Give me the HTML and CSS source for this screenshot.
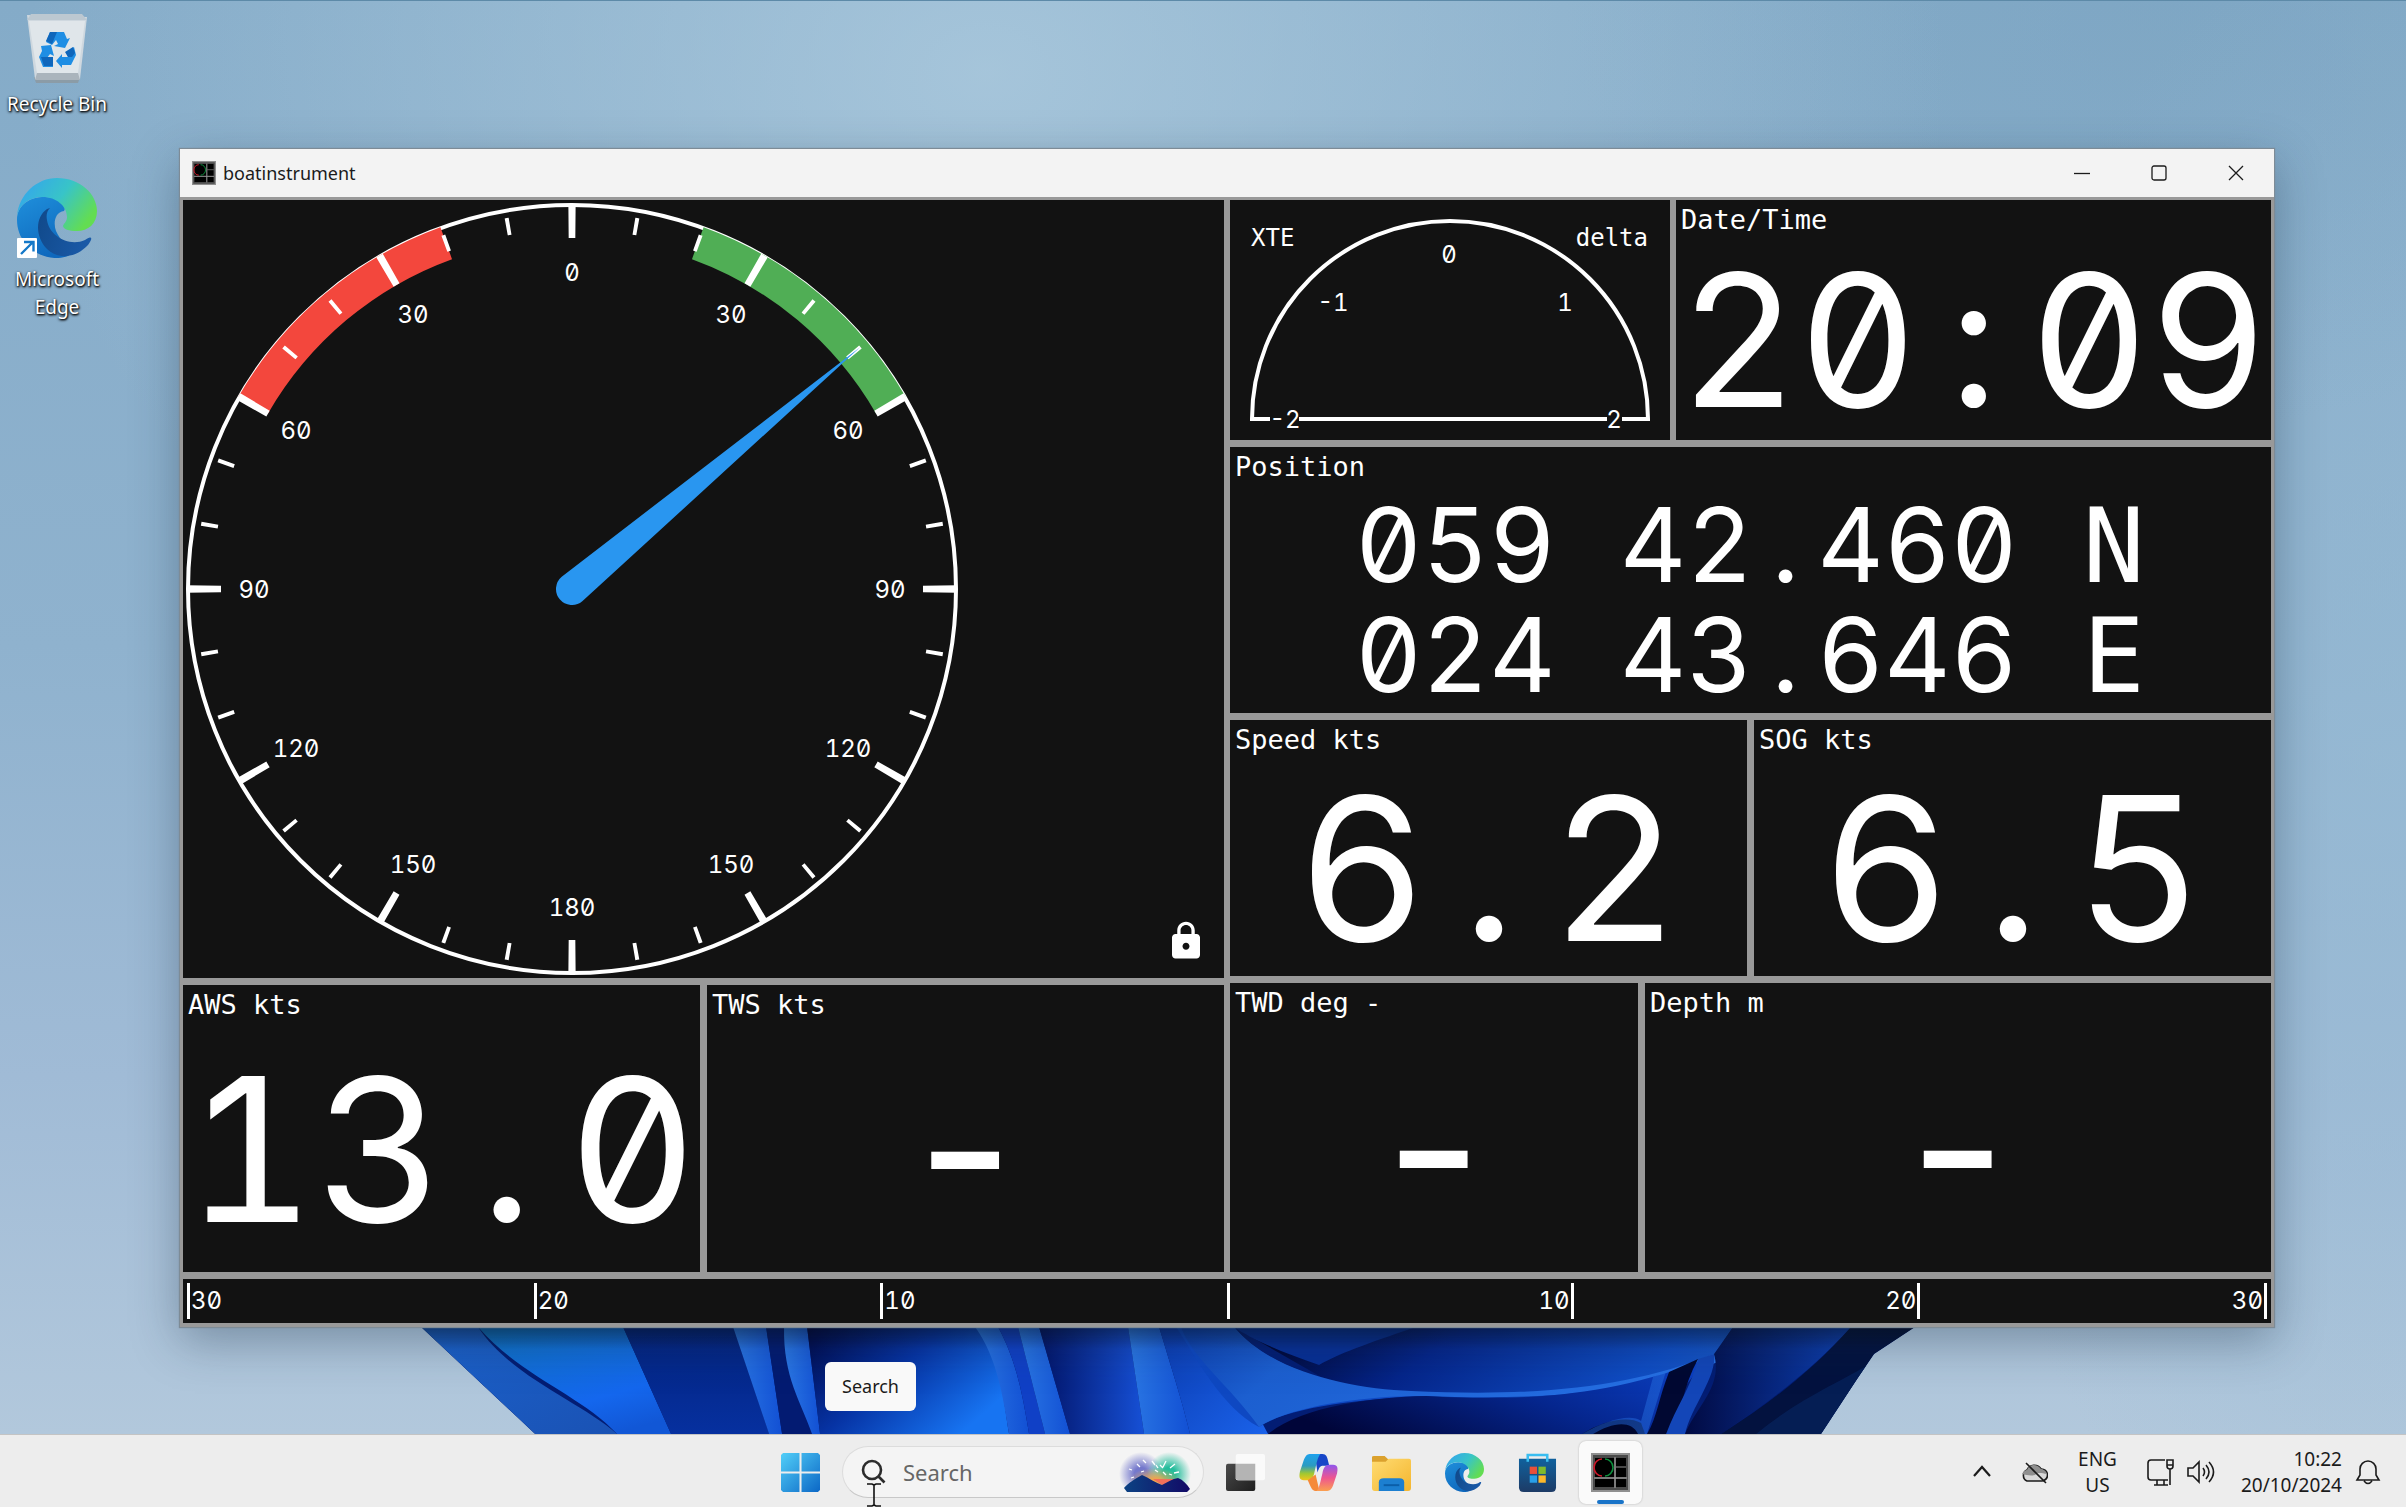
FILE: index.html
```html
<!DOCTYPE html>
<html lang="en">
<head>
<meta charset="utf-8">
<title>boatinstrument</title>
<link rel="stylesheet" href="styles.css">
</head>
<body>
<svg class="defs" aria-hidden="true">
  <defs>
    <linearGradient id="edgeTop" x1="0" y1="0.2" x2="1" y2="0.7"><stop offset="0.1" stop-color="#35abe6"/><stop offset="0.5" stop-color="#38c4c8"/><stop offset="0.95" stop-color="#63dd52"/></linearGradient>
    <linearGradient id="edgeMid" x1="0" y1="0" x2="0.5" y2="1"><stop offset="0" stop-color="#1f8fdb"/><stop offset="1" stop-color="#0e68bd"/></linearGradient>
    <linearGradient id="edgeLow" x1="0" y1="0.3" x2="1" y2="0.6"><stop offset="0" stop-color="#114a8c"/><stop offset="1" stop-color="#1a5aa8"/></linearGradient>
    <symbol id="edge" viewBox="0 0 80 80">
      <path fill="url(#edgeMid)" d="M0 42C0 26 14 19 27 19c17 0 23 9 20 14-9 1-11 12-8 20 4 10 14 17 22 18l-10 7C30 86 0 70 0 42z"/>
      <path fill="url(#edgeLow)" d="M30 31c-12 8-12 28 0 40 11 11 29 9 41-4 2-3 4-6 3-7s-3 0-6 2c-16 7-36-4-38-20-1-5 0-9 3-12z"/>
      <path fill="url(#edgeTop)" d="M0 38C2 16 20 0 40 0c23 0 40 16 40 33 0 13-9 20-20 20-8 0-14-2-14-5 0-2 4-4 4-9 0-11-11-20-24-20C12 19 2 27 0 38z"/>
    </symbol>
    <symbol id="boat" viewBox="0 0 39 39">
      <path fill="#8f8f8f" d="M0 0h39v39H0z"/><path fill="#4a4a4a" d="M2 2h35v35H2z"/>
      <path fill="#000" d="M4 5h19v19H4zM25 5h10v8H25zM25 15h10v9H25zM4 26h19v8H4zM25 26h10v8H25z"/>
      <path stroke="#a9a9a9" stroke-width="1" d="M24 4v31M3 25h33"/>
      <path fill="none" stroke="#d0182a" stroke-width="1.6" d="M11 6a8 8.500 0 0 0 0 17"/>
      <path fill="none" stroke="#0c8f3c" stroke-width="1.6" d="M14 6a8 8.500 0 0 1 0 17"/>
    </symbol>
  </defs>
</svg>

<main class="desktop">
  <svg class="bloom" viewBox="0 0 1494 107" aria-hidden="true">
    <defs>
      <linearGradient id="bA" x1="0" x2="1" y1="0" y2="1"><stop offset="0" stop-color="#1b62cc"/><stop offset="1" stop-color="#1a52b4"/></linearGradient>
      <linearGradient id="bB" x1="0.2" x2="0.7" y1="0" y2="1"><stop offset="0" stop-color="#0f72c6"/><stop offset="0.7" stop-color="#1467ee"/><stop offset="1" stop-color="#1157d6"/></linearGradient>
      <linearGradient id="bC" x2="0" y2="1"><stop offset="0" stop-color="#03237f"/><stop offset="1" stop-color="#06309f"/></linearGradient>
      <linearGradient id="bD"><stop offset="0" stop-color="#2b78e4"/><stop offset="1" stop-color="#1250d4"/></linearGradient>
      <linearGradient id="bG" x1="0" x2="1" y1="0" y2="0.6"><stop offset="0.02" stop-color="#000848"/><stop offset="0.5" stop-color="#0633a4"/><stop offset="1" stop-color="#1774f2"/></linearGradient>
      <linearGradient id="bK"><stop offset="0" stop-color="#021468"/><stop offset="1" stop-color="#1650d6"/></linearGradient>
      <linearGradient id="bM" x2="1" y2="1"><stop offset="0" stop-color="#0a3aae"/><stop offset="1" stop-color="#1a62ea"/></linearGradient>
      <linearGradient id="bN" x1="0" x2="1" y1="0" y2="0.2"><stop offset="0" stop-color="#0c3fb0"/><stop offset="0.25" stop-color="#1c5fd0"/><stop offset="1" stop-color="#2670e4"/></linearGradient>
      <linearGradient id="bP" x1="0" x2="1" y1="0.5" y2="0.7"><stop offset="0" stop-color="#00042e"/><stop offset="0.35" stop-color="#05258a"/><stop offset="0.8" stop-color="#0f4cc2"/><stop offset="1" stop-color="#1b5ac6"/></linearGradient>
      <linearGradient id="bQ" x1="0" x2="1" y1="0.6" y2="0.2"><stop offset="0" stop-color="#000539"/><stop offset="0.55" stop-color="#05268e"/><stop offset="1" stop-color="#0c40c4"/></linearGradient>
      <linearGradient id="bR"><stop offset="0" stop-color="#010a42"/><stop offset="1" stop-color="#0d40b4"/></linearGradient>
      <linearGradient id="bS" x2="0" y2="1"><stop offset="0" stop-color="#000" stop-opacity="0.35"/><stop offset="1" stop-color="#000" stop-opacity="0"/></linearGradient>
      <clipPath id="bloomEdge"><path d="M0 0H1494L1453 27 1436 52 1400 107H114z"/></clipPath>
    </defs>
    <g clip-path="url(#bloomEdge)">
      <path fill="#031d74" d="M0 0h1494v107H0z"/>
      <path fill="url(#bA)" d="M0 0H57C90 50 160 75 196 107H114z"/>
      <path fill="url(#bB)" d="M57 0H202L250 107H196C160 68 100 50 57 0z"/>
      <path fill="url(#bC)" d="M202 0H312L348 107H250z"/>
      <path fill="url(#bD)" d="M312 0H345L361 107H348z"/>
      <path fill="#031b72" d="M345 0H363C366 50 385 75 392 107H361z"/>
      <path fill="url(#bD)" d="M363 0H386L399 107H391C380 75 362 50 363 0z"/>
      <path fill="url(#bG)" d="M386 0H554C580 30 582 70 588 107H399z"/>
      <path fill="url(#bD)" d="M554 0H577C596 35 602 70 608 107H588C582 70 576 30 554 0z"/>
      <path fill="#1040c6" d="M577 0H597L624 107H608C602 70 596 35 577 0z"/>
      <path fill="url(#bD)" d="M597 0H618L649 107H624z"/>
      <path fill="url(#bK)" d="M618 0H707L723 107H649z"/>
      <path fill="url(#bD)" d="M707 0H738C750 40 760 70 769 107H723z"/>
      <path fill="url(#bM)" d="M738 0H790L847 107H769C760 70 750 40 738 0z"/>
      <path fill="url(#bP)" d="M813 0H1312L1294 27C1200 80 1040 90 900 50z"/>
      <path fill="#072f96" d="M813 0H995C960 12 920 25 898 38 860 25 830 12 813 0z"/>
      <path fill="#0e48c2" d="M755 0H813C850 45 930 64 1005 69 950 72 870 78 838 100 800 80 775 30 755 0z"/>
      <path fill="url(#bN)" d="M813 0C850 45 930 62 990 64 1120 70 1210 60 1293 27L1297 35C1220 65 1120 74 1005 69 950 68 870 78 838 100 810 60 770 30 760 0z"/>
      <path fill="url(#bQ)" d="M847 107C880 80 950 70 1005 69 1120 76 1200 65 1285 32L1228 107z"/>
      <path fill="#00072f" d="M1161 107C1180 95 1205 88 1220 96L1224 107z"/>
      <path fill="url(#bN)" d="M1161 107C1185 93 1210 86 1220 94L1232 50 1245 44 1226 107H1217C1210 92 1190 96 1172 107z" opacity="0.5"/>
      <path fill="#010832" d="M1248 45L1277 32C1262 60 1258 85 1258 107H1226C1236 90 1238 70 1248 45z"/>
      <path fill="#1346b8" d="M1277 32L1293 27C1296 50 1270 80 1264 107H1245C1255 80 1270 60 1277 32z"/>
      <path fill="url(#bR)" d="M1312 0H1430C1390 45 1340 80 1300 107H1264C1275 80 1302 60 1293 27z"/>
      <path fill="#03123f" d="M1430 0H1494L1453 27 1400 107H1300C1350 75 1390 45 1430 0z"/>
      <path fill="#07235e" d="M1450 36L1436 60 1400 107H1335C1380 70 1420 55 1450 36z" opacity="0.7"/>
      <path fill="url(#bS)" d="M0 0h1494v22H0z"/>
    </g>
  </svg>

  <nav class="shortcuts" aria-label="Desktop">
    <a class="shortcut" href="#recycle">
      <svg class="shortcut-icon" viewBox="0 0 80 72" aria-hidden="true">
        <path fill="#8d9499" d="M17 66h46l-2 6H19z" opacity="0.7"/>
        <path fill="#cfd8df" d="M10 4l60 2-7 62H18z"/><path fill="#e0e6ea" d="M12 10h56l-7 52H20z"/>
        <path fill="#bcc8d1" d="M14 3h51l5 6H10z"/><path fill="#aab4bc" d="M20 62h41l2 7H18z"/>
        <path fill="#1f8ee4" d="M33 21h14l3 7 3-1-5 10-11-2 4-2-2-4-4 5-6-3z"/><path fill="#0f66bb" d="M33 21h7l-5 12-6-3z"/>
        <path fill="#1f8ee4" d="M24 35l10-1 3 11-4-2-3 4h6v9H26l-4-10 3-6z"/><path fill="#0f66bb" d="M24 46h12v9H27z"/>
        <path fill="#1f8ee4" d="M39 50l6-7v3h6l-2-5 8-5 2 8-5 10H45v3z"/><path fill="#0f66bb" d="M48 41l8-5 2 6-3 4h-4z"/>
      </svg>
      <span>Recycle Bin</span>
    </a>
    <a class="shortcut" href="#edge">
      <svg class="shortcut-icon shortcut-icon--edge" viewBox="0 0 80 80" aria-hidden="true">
        <use href="#edge"/>
        <rect y="60" width="20" height="20" rx="1" fill="#fff"/>
        <path fill="none" stroke="#1478c8" stroke-width="2.4" d="M4 76L16 64M7 64h9.500v9.500"/>
      </svg>
      <span>Microsoft<br>Edge</span>
    </a>
  </nav>

  <section class="window" aria-label="boatinstrument">
    <header class="titlebar">
      <svg class="titlebar-icon" aria-hidden="true"><use href="#boat"/></svg>
      <h1 class="titlebar-text">boatinstrument</h1>
      <button class="caption" aria-label="Minimize"><svg viewBox="0 0 16 16"><path d="M0 8.500h16"/></svg></button>
      <button class="caption" aria-label="Maximize"><svg viewBox="0 0 16 16"><rect x="1" y="1" width="14" height="14" rx="2"/></svg></button>
      <button class="caption" aria-label="Close"><svg viewBox="0 0 16 16"><path d="M1 1l14 14M15 1L1 15"/></svg></button>
    </header>

    <div class="board">
      <div class="board-left">
        <article class="box box--dial">
          <svg class="dial" viewBox="0 0 778 778" role="img" aria-label="Apparent wind angle">
            <circle class="dial-ring" cx="389" cy="389" r="384"/>
            <g transform="rotate(-90 389 389)">
              <circle class="dial-port" cx="389" cy="389" r="368" pathLength="360"/>
              <circle class="dial-starboard" cx="389" cy="389" r="368" pathLength="360"/>
              <circle class="dial-minor" cx="389" cy="389" r="368" pathLength="360"/>
              <circle class="dial-major" cx="389" cy="389" r="368" pathLength="360"/>
            </g>
            <g class="dial-text">
              <text x="389" y="81">0</text>
              <text x="548" y="123">30</text><text x="665" y="239">60</text><text x="707" y="398">90</text>
              <text x="665" y="557">120</text><text x="548" y="673">150</text><text x="389" y="716">180</text>
              <text x="230" y="673">150</text><text x="113" y="557">120</text><text x="71" y="398">90</text>
              <text x="113" y="239">60</text><text x="230" y="123">30</text>
            </g>
            <path class="needle" transform="rotate(50 389 389)" d="M389 13L405 389a16 16 0 1 1-32 0z"/>
          </svg>
          <button class="lock" aria-label="Locked"><svg viewBox="0 0 24 24"><path d="M18 8h-1V6c0-2.760-2.240-5-5-5S7 3.240 7 6v2H6c-1.100 0-2 .9-2 2v10c0 1.100.9 2 2 2h12c1.100 0 2-.9 2-2V10c0-1.100-.9-2-2-2zm-6 9c-1.100 0-2-.9-2-2s.9-2 2-2 2 .9 2 2-.9 2-2 2zm3.100-9H8.900V6c0-1.710 1.390-3.100 3.100-3.100s3.100 1.390 3.100 3.100v2z"/></svg></button>
        </article>
        <div class="pair">
          <article class="box"><h2 class="label">AWS kts</h2><p class="value value--xl"><span>13<span class="cell">.</span>0</span></p></article>
          <article class="box"><h2 class="label">TWS kts</h2><p class="value value--none">-</p></article>
        </div>
      </div>

      <div class="board-right">
        <div class="pair pair--top">
          <article class="box">
            <svg class="xte" viewBox="0 0 440 240" role="img" aria-label="Cross track error">
              <path class="xte-arc" d="M22 219a198 198 0 0 1 396 0z"/>
              <path class="xte-gap" d="M40 206h29v26H40zM377 206h15v26h-15z"/>
              <text x="21" y="46">XTE</text><text x="418" y="46" text-anchor="end">delta</text>
              <g class="xte-scale"><text x="219" y="63">0</text><text x="103" y="111">-1</text><text x="335" y="111">1</text><text x="55" y="228">-2</text><text x="384" y="228">2</text></g>
            </svg>
          </article>
          <article class="box"><h2 class="label">Date/Time</h2><p class="value value--time"><span>20<span class="cell">:</span>09</span></p></article>
        </div>
        <article class="box"><h2 class="label">Position</h2><p class="value value--position"><span>059<span class="cell"> </span>42<span class="cell">.</span>460<span class="cell"> </span><span class="cell hemisphere">N</span></span><span>024<span class="cell"> </span>43<span class="cell">.</span>646<span class="cell"> </span><span class="cell hemisphere">E</span></span></p></article>
        <div class="pair">
          <article class="box"><h2 class="label">Speed kts</h2><p class="value value--xl"><span>6<span class="cell">.</span>2</span></p></article>
          <article class="box"><h2 class="label">SOG kts</h2><p class="value value--xl"><span>6<span class="cell">.</span>5</span></p></article>
        </div>
        <div class="pair pair--bottom">
          <article class="box"><h2 class="label">TWD deg -</h2><p class="value value--none">-</p></article>
          <article class="box"><h2 class="label">Depth m</h2><p class="value value--none">-</p></article>
        </div>
      </div>

      <article class="box rudder" aria-label="Rudder angle">
        <span>30</span><span>20</span><span>10</span>
        <span class="stbd stbd--first">10</span><span class="stbd">20</span><span class="stbd">30</span>
      </article>
    </div>
  </section>

  <div class="tooltip" role="tooltip">Search</div>
</main>

<footer class="taskbar">
  <div class="apps">
    <button class="app" aria-label="Start"><svg viewBox="0 0 38 38">
      <defs><linearGradient id="win" x1="0" y1="0" x2="38" y2="38" gradientUnits="userSpaceOnUse"><stop offset="0" stop-color="#52cff8"/><stop offset="1" stop-color="#0b67c6"/></linearGradient></defs>
      <path fill="url(#win)" d="M2 0h16v18H0V2zM20 0h16l2 2v16H20zM0 20h18v18H2l-2-2zM20 20h18v16l-2 2H20z"/></svg></button>
    <div class="search">
      <svg class="search-glass" viewBox="0 0 26 26" aria-hidden="true"><circle cx="11" cy="11" r="9"/><path d="M17.500 17.500l6 6"/></svg>
      <input class="search-input" type="search" aria-label="Search" placeholder="Search">
      <svg class="search-art" viewBox="0 0 72 40" aria-hidden="true">
        <defs>
          <radialGradient id="gl1"><stop offset="0.3" stop-color="#7478cc"/><stop offset="1" stop-color="#7478cc" stop-opacity="0"/></radialGradient>
          <radialGradient id="gl2"><stop offset="0.3" stop-color="#25bd9c"/><stop offset="1" stop-color="#25bd9c" stop-opacity="0"/></radialGradient>
          <radialGradient id="gl3"><stop offset="0.1" stop-color="#f0a54a"/><stop offset="1" stop-color="#e9b45c" stop-opacity="0"/></radialGradient>
          <linearGradient id="hill"><stop offset="0" stop-color="#0c4283"/><stop offset="1" stop-color="#120a66"/></linearGradient>
        </defs>
        <circle cx="22" cy="22" r="22" fill="url(#gl1)"/><circle cx="50" cy="22" r="22" fill="url(#gl2)"/><ellipse cx="36" cy="28" rx="26" ry="12" fill="url(#gl3)"/>
        <path fill="#f2705a" d="M34 27l12 8 12-8z"/>
        <path fill="url(#hill)" d="M5 36c4-5 11-9 18-13 7 3 14 8 20 10 6-3 10-6 16-7 5 2 9 6 12 11l-3 3H8z"/>
        <path fill="none" stroke="#fff" stroke-width="1.300" d="M10 17l3 1M18 12l3 3M24 8l3 3M33 9l3 4M41 13l3 3M47 9l-3 6M56 12l-5 4M60 20l-5 1M36 18l3 2M44 20l3 3M50 22l3 1M12 26l3-1M22 20l3-1M37 13l2 3"/>
      </svg>
    </div>
    <button class="app" aria-label="Task view"><svg viewBox="0 0 40 38">
      <defs><linearGradient id="tv" x2="1" y2="1"><stop offset="0" stop-color="#4a4a4a"/><stop offset="1" stop-color="#1e1e1e"/></linearGradient></defs>
      <rect y="10" width="30" height="28" rx="2" fill="url(#tv)"/><rect x="10" width="30" height="27" rx="2" fill="#fafafa"/><path fill="#b4b4b4" d="M10 10h20v17H12l-2-2z"/></svg></button>
    <button class="app" aria-label="Copilot"><svg viewBox="0 0 40 38">
      <defs>
        <linearGradient id="cp1" x2="0" y2="1"><stop offset="0" stop-color="#1ea2ee"/><stop offset="0.45" stop-color="#2b9bc0"/><stop offset="0.75" stop-color="#a2c830"/><stop offset="1" stop-color="#f2c51c"/></linearGradient>
        <linearGradient id="cp2" x2="0" y2="1"><stop offset="0" stop-color="#8f56ee"/><stop offset="0.5" stop-color="#ee5590"/><stop offset="1" stop-color="#fba04f"/></linearGradient>
      </defs>
      <path fill="#1746c8" d="M16 0h8c4 0 5 3 6 8l1 4h-7c-3 0-4 4-5 7z"/>
      <path fill="url(#cp1)" d="M12 0h10c-3 3-4 10-6 18-1 6-3 9-7 9H5c-5 0-5-4-4-9L5 6c2-5 4-6 7-6z"/>
      <path fill="#f58a3a" d="M9 27l8-6 4 17h-4c-4 0-5-5-8-11z"/>
      <path fill="url(#cp2)" d="M28 38H18c3-3 4-10 6-18 1-6 3-9 7-9h4c5 0 5 4 4 9l-4 12c-2 5-4 6-7 6z"/>
      </svg></button>
    <button class="app" aria-label="File Explorer"><svg viewBox="0 0 40 38">
      <defs><linearGradient id="fd" x2="1" y2="1"><stop offset="0" stop-color="#ffdc72"/><stop offset="1" stop-color="#f4b52e"/></linearGradient></defs>
      <path fill="#dba12d" d="M0 3q0-1 2-1h11l4 4v6H0z"/><path fill="url(#fd)" d="M0 8h14l3-3h21q2 0 2 2v28q0 3-3 3H3q-3 0-3-3z"/>
      <path fill="#1c7fd0" d="M7 38V29q0-4 5-4h16q5 0 5 4v9z"/><path fill="#0b5ea8" d="M12 31h16v2H12z"/></svg></button>
    <button class="app" aria-label="Microsoft Edge"><svg viewBox="0 0 80 80"><use href="#edge"/></svg></button>
    <button class="app" aria-label="Microsoft Store"><svg viewBox="0 0 40 40">
      <defs><linearGradient id="ms" x2="0" y2="1"><stop offset="0" stop-color="#10619d"/><stop offset="1" stop-color="#1d3b66"/></linearGradient></defs>
      <path fill="url(#ms)" d="M1 6h38v29q0 5-5 5H6q-5 0-5-5z"/><path fill="none" stroke="#39bdf0" stroke-width="2.600" d="M10 9V2h20v7"/>
      <path fill="#e9503a" d="M12 14h7.500v7.500H12z"/><path fill="#7fba2c" d="M21 14h7.500v7.500H21z"/><path fill="#28a0e8" d="M12 23h7.500v7.500H12z"/><path fill="#fcb82a" d="M21 23h7.500v7.500H21z"/></svg></button>
    <button class="app app--active" aria-label="boatinstrument"><svg viewBox="0 0 39 39"><use href="#boat"/></svg></button>
  </div>

  <div class="tray">
    <button class="tray-btn" aria-label="Show hidden icons"><svg class="tray-icon" viewBox="0 0 28 28"><path stroke-width="2.200" d="M6 18l8-9 8 9"/></svg></button>
    <button class="tray-btn" aria-label="OneDrive"><svg class="tray-icon" viewBox="0 0 28 28"><path fill="#d9d9d9" d="M7 23a6 6 0 0 1 0-11 8 8 0 0 1 14-1 6 6 0 0 1 1 12z"/><path fill="#8f8f8f" stroke="none" d="M2 16c2-4 5-4 5-4 2-6 10-7 14-1 2 0 5 2 6 5-6-1-9-2-12 1-4 1-9 0-13-1z"/><path d="M6 5l20 20"/></svg></button>
    <button class="tray-btn tray-btn--text tray-btn--lang">ENG<br>US</button>
    <button class="tray-btn" aria-label="Network and volume">
      <svg class="tray-icon" viewBox="0 0 28 28"><path d="M18 2H4a3 3 0 0 0-3 3v14a3 3 0 0 0 3 3h17M7 27h14M10 22v5M17 22v5M20 2h6v6a3 3 0 0 1-6 0zM20 7h6M23 11v16"/></svg>
      <svg class="tray-icon" viewBox="0 0 28 28"><path d="M1 10h5l6-6v20l-6-6H1zM16 10q3 4 0 8M19 7q6 7 0 14M22 4q9 10 0 20"/></svg>
    </button>
    <button class="tray-btn tray-btn--text tray-btn--clock">10:22<br>20/10/2024</button>
    <button class="tray-btn" aria-label="Notifications"><svg class="tray-icon" viewBox="0 0 28 28"><path d="M3 22l3-5v-6a8 8 0 0 1 16 0v6l3 5zM10 23q4 5 8 0"/></svg></button>
  </div>

  <svg class="ibeam" viewBox="0 0 14 24" aria-hidden="true"><path d="M0 1h5l2 1 2-1h5M7 2v20M0 23h5l2-1 2 1h5"/></svg>
</footer>
</body>
</html>
```
FILE: styles.css
```css
* { box-sizing: border-box; }

body {
  margin: 0;
  height: 100vh;
  display: flex;
  flex-direction: column;
  overflow: hidden;
  font-family: "Noto Sans", "Open Sans", sans-serif;
  font-size: 18px;
  color: #1b1b1b;
}

h1, h2, p { margin: 0; font-weight: 400; }
button { border: 0; padding: 0; background: none; font: inherit; color: inherit; }
svg { display: block; }
.defs { position: absolute; width: 0; height: 0; }

/* Desktop */
.desktop {
  flex: 1;
  position: relative;
  border-top: 1px solid #5d8aa8;
  background:
    radial-gradient(ellipse 40% 50% at 41% 5%, rgba(176, 205, 224, 0.75), transparent),
    radial-gradient(ellipse 25% 30% at 90% 0%, rgba(118, 160, 190, 0.4), transparent),
    radial-gradient(ellipse 20% 60% at 100% 55%, rgba(150, 186, 212, 0.7), transparent),
    linear-gradient(180deg, #84abc8 0%, #8fb2ce 45%, #a0bbd6 75%, #b2c8dc 100%);
}

.bloom {
  position: absolute;
  left: 17.5%;
  bottom: 0;
  width: 62.1%;
}

.shortcuts {
  width: 114px;
  padding-top: 10px;
  display: flex;
  flex-direction: column;
  gap: 60px;
}
.shortcut {
  display: flex;
  flex-direction: column;
  align-items: center;
  gap: 7px;
  font-size: 19px;
  line-height: 28px;
  text-align: center;
  text-decoration: none;
  color: #fff;
  text-shadow: 0 1px 3px #000, 1px 1px 2px #000;
}
.shortcut-icon { width: 80px; height: 72px; }
.shortcut-icon--edge { height: 80px; }

.window {
  position: absolute;
  top: 148px;
  right: 132px;
  bottom: 107px;
  left: 180px;
  display: flex;
  flex-direction: column;
  background: #999;
  box-shadow: 0 0 1px 1px #7d8b96, 0 14px 44px rgba(20, 40, 60, 0.35);
}

.titlebar {
  height: 48px;
  padding-left: 11px;
  display: flex;
  align-items: center;
  background: #f3f3f3;
}
.titlebar-icon { width: 26px; height: 24px; margin-right: 6px; }
.titlebar-text { flex: 1; font-size: 18px; }
.caption {
  width: 77px;
  height: 48px;
  display: grid;
  place-items: center;
}
.caption svg { width: 16px; height: 16px; fill: none; stroke: #1b1b1b; stroke-width: 1.3; }

/* Instrument board */
.board {
  flex: 1;
  min-height: 0;
  padding: 3px 3px 4px;
  display: grid;
  grid-template: minmax(0, 1fr) 44px / 1fr 1fr;
  gap: 7px 6px;
  font-family: "DejaVu Sans Mono", "Liberation Mono", monospace;
  color: #fff;
}
.board-left, .board-right { display: grid; gap: 7px; min-height: 0; min-width: 0; }
.board-left { grid-template-rows: minmax(0, 778fr) minmax(0, 287fr); }
.board-right { grid-template-rows: minmax(0, 240fr) minmax(0, 266fr) minmax(0, 256fr) minmax(0, 289fr); }

.pair {
  display: grid;
  grid-template-columns: minmax(0, 1fr) minmax(0, 1fr);
  gap: 7px;
  min-height: 0;
}
.pair--top { grid-template-columns: minmax(0, 440fr) minmax(0, 595fr); gap: 6px; }
.pair--bottom { grid-template-columns: minmax(0, 408fr) minmax(0, 626fr); }

.box {
  min-width: 0;
  min-height: 0;
  display: flex;
  flex-direction: column;
  background: #121212;
}
.label {
  padding: 4px 5px;
  font-size: 27px;
  line-height: 32px;
  white-space: nowrap;
}

/* Readings use tabular digits with a slashed zero */
.value, .dial-text, .xte-scale, .rudder {
  font-family: "Inter", "DejaVu Sans Mono", sans-serif;
  font-feature-settings: "tnum", "zero";
}
.value {
  flex: 1;
  min-height: 0;
  display: grid;
  place-content: center;
  line-height: 1;
  white-space: pre;
}
/* Separators and hemisphere letters take a full digit's width */
.cell { display: inline-block; text-align: center; }
.hemisphere { font-family: "DejaVu Sans Mono", monospace; line-height: 1; }
.value--time { font-size: 184px; }
.value--time .cell { width: 112px; }
.value--position { font-size: 103px; line-height: 110px; }
.value--position .cell { width: 64px; }
.value--xl { font-size: 200px; }
.value--xl .cell { width: 123px; }
.value--none { font-size: 212px; }

.box--dial {
  flex-direction: row;
  justify-content: space-between;
  align-items: flex-end;
}
.dial { height: 100%; }
.dial circle { fill: none; }
.dial-ring { stroke: #fff; stroke-width: 4; }
.dial-port { stroke: #f3473d; stroke-width: 34; stroke-dasharray: 0 300 40 20; }
.dial-starboard { stroke: #50ae55; stroke-width: 34; stroke-dasharray: 0 20 40 300; }
.dial-minor { stroke: #fff; stroke-width: 17; stroke-dasharray: 0.6 9.4; stroke-dashoffset: 0.3; }
.dial-major { stroke: #fff; stroke-width: 34; stroke-dasharray: 1.1 28.9; stroke-dashoffset: 0.55; }
.dial-text { fill: #fff; font-size: 24px; text-anchor: middle; }
.needle { fill: #2996f0; }
.lock { margin: 0 17px 16px 0; }
.lock svg { width: 42px; height: 42px; fill: #fff; }

.xte { width: 100%; height: 100%; fill: #fff; font-size: 24px; }
.xte-scale { text-anchor: middle; }
.xte-arc { fill: none; stroke: #fff; stroke-width: 4; }
.xte-gap { fill: #121212; }

.rudder {
  grid-column: 1 / -1;
  padding: 4px;
  display: grid;
  grid-template-columns: repeat(6, 1fr);
  font-size: 24px;
  line-height: 36px;
}
.rudder span { border-left: 3px solid #fff; padding: 0 1px; }
.rudder .stbd { border-left: 0; border-right: 3px solid #fff; text-align: right; }
.rudder .stbd--first { border-left: 3px solid #fff; }

.tooltip {
  position: absolute;
  left: 825px;
  bottom: 23px;
  width: 91px;
  height: 49px;
  border-radius: 6px;
  background: #f9f9f9;
  line-height: 49px;
  text-align: center;
}

/* Taskbar */
.taskbar {
  position: relative;
  height: 73px;
  padding: 2px 0 0 5px;
  display: grid;
  grid-template-columns: 1fr auto 1fr;
  align-items: center;
  border-top: 1px solid #c4c4c4;
  background: #ededed;
}
.apps { grid-column: 2; display: flex; align-items: center; gap: 10px; }
.app {
  position: relative;
  width: 63px;
  height: 63px;
  display: grid;
  place-items: center;
  border-radius: 7px;
}
.app svg { width: 39px; height: 39px; }
.app--active { background: #fafafa; box-shadow: 0 0 2px rgba(0, 0, 0, 0.25); }
.app--active::after {
  content: "";
  position: absolute;
  bottom: 0;
  left: 18px;
  width: 27px;
  height: 4px;
  border-radius: 2px;
  background: #1a74c8;
}
.search {
  width: 362px;
  height: 52px;
  padding: 0 12px 0 18px;
  display: flex;
  align-items: center;
  border: 1px solid #dcdcdc;
  border-bottom-color: #c8c8c8;
  border-radius: 26px;
  background: #f4f4f4;
}
.search-glass { width: 26px; height: 26px; fill: none; stroke: #2b2b2b; stroke-width: 2.6; }
.search-input {
  flex: 1;
  min-width: 0;
  border: 0;
  padding: 0 0 0 16px;
  background: none;
  font: inherit;
  font-size: 22px;
}
.search-input::placeholder { color: #666; opacity: 1; }
.search-art { width: 72px; height: 40px; }

.tray {
  grid-column: 3;
  justify-self: end;
  padding-right: 12px;
  display: flex;
  align-items: center;
}
.tray-btn { height: 56px; padding: 0 12px; display: flex; align-items: center; gap: 12px; }
.tray-btn--text { display: block; font-size: 19px; line-height: 26px; }
.tray-btn--lang { padding: 0 18px; }
.tray-btn--clock { padding: 0 0 0 14px; text-align: right; }
.tray-icon { width: 28px; height: 28px; fill: none; stroke: #1b1b1b; stroke-width: 1.6; }

.ibeam {
  position: absolute;
  left: 867px;
  bottom: 0;
  width: 14px;
  height: 24px;
  fill: none;
  stroke: #111;
  stroke-width: 1.6;
}
```
